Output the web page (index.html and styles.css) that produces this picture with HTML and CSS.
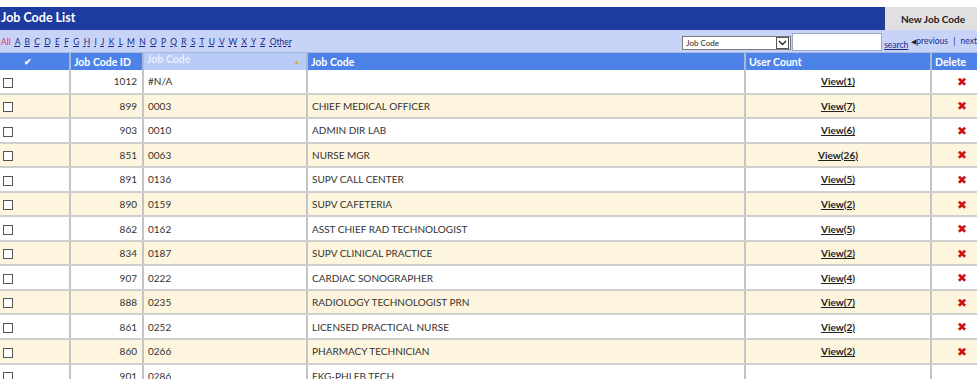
FILE: index.html
```html
<!DOCTYPE html>
<html lang="en">
<head>
    <meta charset="UTF-8">
    <title>Job Code List</title>
    <link rel="stylesheet" href="styles.css">
</head>
<body>
    <div class="title-bar">
        <h1>Job Code List</h1>
        <button class="new-button">New Job Code</button>
    </div>
    <div class="filter-bar">
        <div class="letters">
            <a class="all" href="#">All</a>
            <a href="#">A</a> <a href="#">B</a> <a href="#">C</a> <a href="#">D</a> <a href="#">E</a>
            <a href="#">F</a> <a href="#">G</a> <a href="#">H</a> <a href="#">I</a> <a href="#">J</a>
            <a href="#">K</a> <a href="#">L</a> <a href="#">M</a> <a href="#">N</a> <a href="#">O</a>
            <a href="#">P</a> <a href="#">Q</a> <a href="#">R</a> <a href="#">S</a> <a href="#">T</a>
            <a href="#">U</a> <a href="#">V</a> <a href="#">W</a> <a href="#">X</a> <a href="#">Y</a>
            <a href="#">Z</a> <a class="other" href="#">Other</a>
        </div>
        <div class="search-group">
            <div class="select-box">
                <span>Job Code</span>
                <span class="arrow"><svg width="9" height="6" viewBox="0 0 9 6"><path d="M1 1 L4.5 4.5 L8 1" fill="none" stroke="#222" stroke-width="1.4"/></svg></span>
            </div>
            <input class="search-input" type="text">
            <a class="search-link" href="#">search</a>
            <span class="pager"><span class="tri">&#9664;</span>previous <span class="sep">|</span> next</span>
        </div>
    </div>

    <table class="grid">
        <thead>
            <tr>
                <th class="col-check">&#10004;</th>
                <th class="col-id">Job Code ID</th>
                <th class="col-code sorted">Job Code <span class="sort-tri">&#9650;</span></th>
                <th class="col-desc">Job Code</th>
                <th class="col-count">User Count</th>
                <th class="col-del">Delete</th>
            </tr>
        </thead>
        <tbody>
            <tr><td><span class="box"></span></td><td class="num">1012</td><td>#N/A</td><td></td><td class="center"><a href="#">View(1)</a></td><td class="center"><span class="del">&#10006;</span></td></tr>
            <tr class="alt"><td><span class="box"></span></td><td class="num">899</td><td>0003</td><td>CHIEF MEDICAL OFFICER</td><td class="center"><a href="#">View(7)</a></td><td class="center"><span class="del">&#10006;</span></td></tr>
            <tr><td><span class="box"></span></td><td class="num">903</td><td>0010</td><td>ADMIN DIR LAB</td><td class="center"><a href="#">View(6)</a></td><td class="center"><span class="del">&#10006;</span></td></tr>
            <tr class="alt"><td><span class="box"></span></td><td class="num">851</td><td>0063</td><td>NURSE MGR</td><td class="center"><a href="#">View(26)</a></td><td class="center"><span class="del">&#10006;</span></td></tr>
            <tr><td><span class="box"></span></td><td class="num">891</td><td>0136</td><td>SUPV CALL CENTER</td><td class="center"><a href="#">View(5)</a></td><td class="center"><span class="del">&#10006;</span></td></tr>
            <tr class="alt"><td><span class="box"></span></td><td class="num">890</td><td>0159</td><td>SUPV CAFETERIA</td><td class="center"><a href="#">View(2)</a></td><td class="center"><span class="del">&#10006;</span></td></tr>
            <tr><td><span class="box"></span></td><td class="num">862</td><td>0162</td><td>ASST CHIEF RAD TECHNOLOGIST</td><td class="center"><a href="#">View(5)</a></td><td class="center"><span class="del">&#10006;</span></td></tr>
            <tr class="alt"><td><span class="box"></span></td><td class="num">834</td><td>0187</td><td>SUPV CLINICAL PRACTICE</td><td class="center"><a href="#">View(2)</a></td><td class="center"><span class="del">&#10006;</span></td></tr>
            <tr><td><span class="box"></span></td><td class="num">907</td><td>0222</td><td>CARDIAC SONOGRAPHER</td><td class="center"><a href="#">View(4)</a></td><td class="center"><span class="del">&#10006;</span></td></tr>
            <tr class="alt"><td><span class="box"></span></td><td class="num">888</td><td>0235</td><td>RADIOLOGY TECHNOLOGIST PRN</td><td class="center"><a href="#">View(7)</a></td><td class="center"><span class="del">&#10006;</span></td></tr>
            <tr><td><span class="box"></span></td><td class="num">861</td><td>0252</td><td>LICENSED PRACTICAL NURSE</td><td class="center"><a href="#">View(2)</a></td><td class="center"><span class="del">&#10006;</span></td></tr>
            <tr class="alt"><td><span class="box"></span></td><td class="num">860</td><td>0266</td><td>PHARMACY TECHNICIAN</td><td class="center"><a href="#">View(2)</a></td><td class="center"><span class="del">&#10006;</span></td></tr>
            <tr><td><span class="box"></span></td><td class="num">901</td><td>0286</td><td>EKG-PHLEB TECH</td><td class="center"></td><td class="center"></td></tr>
        </tbody>
    </table>
</body>
</html>
```

FILE: styles.css
```css
body {
    margin: 0;
    padding-top: 7px;
    font-family: 'Lato', sans-serif;
    color: #333;
    background: white;
    overflow: hidden;
    width: 977px;
}

.title-bar {
    display: flex;
    height: 23px;
    background-color: #1e3b9f;
}

.title-bar h1 {
    flex: 1;
    margin: 0;
    padding-left: 1px;
    font-size: 12.5px;
    line-height: 22px;
    color: white;
    font-weight: bold;
}

.new-button {
    width: 93px;
    height: 23px;
    margin: 0;
    padding: 0 0 0 4px;
    border: none;
    border-left: 1px solid #2a3f80;
    background-color: #e0e0e0;
    font-family: 'Lato', sans-serif;
    font-size: 10px;
    font-weight: bold;
    color: #222;
}

.filter-bar {
    display: flex;
    align-items: center;
    height: 22px;
    background-color: #c7d4f7;
}

.letters {
    flex: 1;
    padding-left: 1px;
    font-size: 8.5px;
    word-spacing: 2.1px;
    padding-top: 1px;
}

.letters a {
    color: #1a2a8a;
    text-decoration: underline dashed;
}

.letters a.all {
    color: #e8305e;
    text-decoration: none;
}

.search-group {
    display: flex;
    align-items: center;
    height: 22px;
}

.select-box {
    display: flex;
    align-items: center;
    justify-content: space-between;
    width: 104px;
    height: 12px;
    margin-top: 3px;
    border: 1px solid #7a7a7a;
    background: white;
    font-size: 8px;
    color: #222;
    padding-left: 3px;
}

.select-box .arrow {
    display: flex;
    align-items: center;
    justify-content: center;
    width: 11px;
    height: 10px;
    margin-right: 1px;
    border: 1px solid #555;
}

.search-input {
    width: 88px;
    height: 16px;
    margin: 2px 0 0 1px;
    padding: 0;
    border: 1px solid #9aa8c8;
    background: white;
}

.search-link {
    margin-left: 2px;
    margin-top: 8px;
    font-size: 8.5px;
    color: #1a2a8a;
}

.pager {
    margin-left: 3px;
    font-size: 8.5px;
    color: #1a2a8a;
    white-space: nowrap;
}

.pager .tri {
    font-size: 7px;
    color: #222;
}

.pager .sep {
    margin: 0 3px;
}

.grid {
    border-collapse: collapse;
    width: 990px;
    table-layout: fixed;
    font-size: 10px;
}

.grid th {
    height: 17px;
    padding: 0 0 0 3px;
    background-color: #4d82e8;
    color: white;
    font-size: 10.5px;
    text-align: left;
    border-left: 2px solid #a8b8d8;
    border-top: 1px solid #a8b8e0;
}

.grid th.col-check {
    border-left: none;
    text-align: left;
    padding-left: 24px;
    width: 45px;
    font-size: 9px;
}

.grid th.col-id { width: 68px; }
.grid th.col-code { width: 159px; }
.grid th.col-desc { width: 433px; }
.grid th.col-count { width: 181px; }
.grid th.col-del { width: 56px; }

.grid th.sorted {
    background-color: #b9cbf7;
    color: #e8efff;
}

.sort-tri {
    float: right;
    margin-right: 6px;
    font-size: 6px;
    color: #e0b020;
    line-height: 17px;
}

.grid td {
    height: 22.55px;
    padding: 0 0 0 4px;
    border-left: 2px solid #c4c4c4;
    border-bottom: 2px solid #cfcfcf;
    white-space: nowrap;
    overflow: hidden;
}

.grid td:first-child {
    border-left: none;
    padding-left: 3px;
}

.grid tr.alt td {
    background-color: #fdf5dd;
}

.grid td.num {
    text-align: right;
    padding-right: 5px;
}

.grid td.center {
    text-align: center;
    padding-left: 0;
}

.grid td a {
    color: #222;
    font-weight: bold;
}

.box {
    display: inline-block;
    width: 8px;
    height: 8px;
    border: 1px solid #555;
    background: white;
    vertical-align: middle;
}

.del {
    color: #cc1111;
    font-size: 12px;
}
```
